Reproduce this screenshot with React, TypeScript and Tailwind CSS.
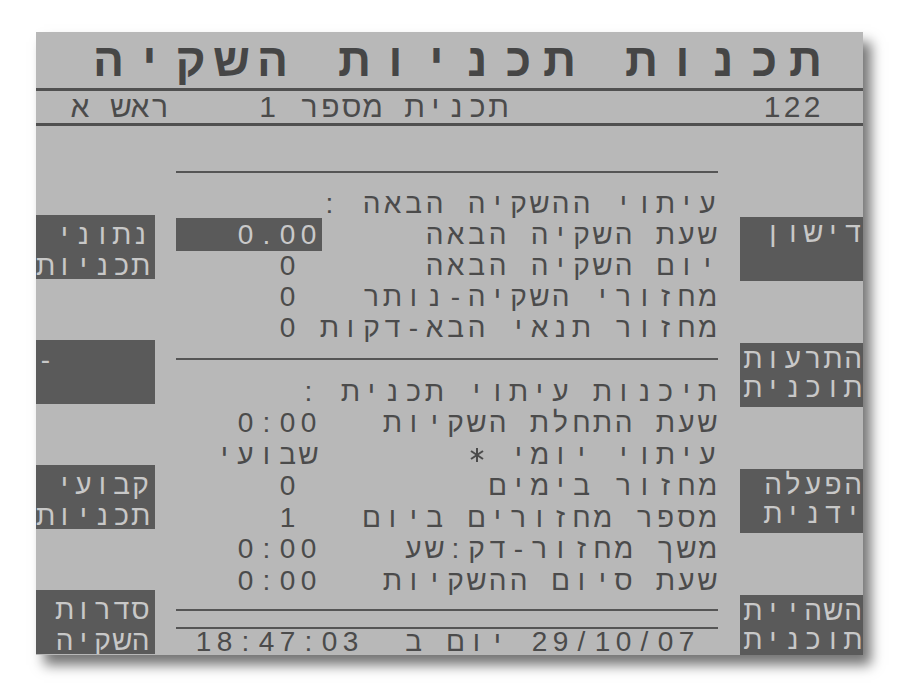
import React from 'react';

type CellsProps = {
  text: string;
  rtl?: boolean;
  cell?: string;
};

// the LCD's six-spoke asterisk
const Star = () => (
  <svg viewBox="0 0 16 16" className="mx-auto h-[16px] w-[16px]" stroke="currentColor" strokeWidth="2">
    <line x1="8" y1="1" x2="8" y2="15" />
    <line x1="2" y1="4" x2="14" y2="12" />
    <line x1="2" y1="12" x2="14" y2="4" />
  </svg>
);

// one character per fixed cell, like the LCD's character grid
const Cells: React.FC<CellsProps> = ({ text, rtl = true, cell = 'w-[21px]' }) => (
  <div className={`flex shrink-0 items-center ${rtl ? 'flex-row-reverse' : 'flex-row'}`}>
    {Array.from(text).map((ch, i) => (
      <span key={i} className={`${cell} shrink-0 text-center`}>
        {ch === '*' ? <Star /> : ch === ' ' ? '\u00a0' : ch}
      </span>
    ))}
  </div>
);

interface RowData {
  label: string;
  value?: string;
  boxed?: boolean;
  rtlValue?: boolean;
}

const section1: RowData[] = [
  { label: 'עיתוי ההשקיה הבאה :' },
  { label: 'שעת השקיה הבאה', value: '0.00', boxed: true },
  { label: 'יום השקיה הבאה', value: '0 ' },
  { label: 'מחזורי השקיה-נותר', value: '0 ' },
  { label: 'מחזור תנאי הבא-דקות', value: '0 ' },
];

const section2: RowData[] = [
  { label: 'תיכנות עיתוי תכנית :' },
  { label: 'שעת התחלת השקיות', value: '0:00' },
  { label: 'עיתוי יומי *', value: 'שבועי', rtlValue: true },
  { label: 'מחזור בימים', value: '0 ' },
  { label: 'מספר מחזורים ביום', value: '1 ' },
  { label: 'משך מחזור-דק:שע', value: '0:00' },
  { label: 'שעת סיום ההשקיות', value: '0:00' },
];

const Row: React.FC<RowData & { height: string }> = ({ label, value, boxed, rtlValue, height }) => (
  <div className={`flex min-w-0 items-center ${height}`}>
    <div
      className={`flex w-[146px] shrink-0 items-center justify-end pr-[3px] ${
        boxed ? 'h-[33px] bg-[#5a5a5a] text-[#c9c9c9]' : ''
      }`}
    >
      {value && <Cells text={value} rtl={!!rtlValue} />}
    </div>
    <div className="flex min-w-0 flex-1 justify-end">
      <Cells text={label} />
    </div>
  </div>
);

const LeftKey: React.FC<{ lines: string[]; dash?: boolean }> = ({ lines, dash }) => (
  <div className="h-[64px] shrink-0 overflow-hidden bg-[#5a5a5a] pt-[4px] pr-[5px] text-[#c8c8c8]">
    {dash && (
      <div className="flex h-[31px] items-center">
        <Cells text="-" cell="w-[19px]" />
      </div>
    )}
    {lines.map((l, i) => (
      <div key={i} className="flex h-[31px] items-center justify-end">
        <Cells text={l} cell="w-[19px]" />
      </div>
    ))}
  </div>
);

const RightKey: React.FC<{ lines: string[] }> = ({ lines }) => (
  <div className="h-[64px] shrink-0 overflow-hidden bg-[#5a5a5a] pt-[1px] text-[#c8c8c8]">
    {lines.map((l, i) => (
      <div key={i} className="flex h-[29px] items-center justify-end">
        <Cells text={l} cell="w-[20px]" />
      </div>
    ))}
  </div>
);

export default function App() {
  return (
    <div className="h-[687px] w-full overflow-hidden bg-white pt-[32px] pl-[36px] font-['Liberation_Sans','DejaVu_Sans',sans-serif] leading-none text-[#4b4b4b]">
      <div className="flex h-[623px] w-[827px] flex-col overflow-hidden bg-[#b8b8b8] shadow-[8px_10px_12px_rgba(0,0,0,0.55)]">
        {/* title */}
        <div className="flex h-[56px] shrink-0 items-center justify-end pr-[37px] text-[46px] font-bold text-[#464646]">
          <Cells text="תכנות תכניות השקיה" cell="w-[41px]" />
        </div>
        <div className="h-[3px] shrink-0 bg-[#505050]" />

        {/* head / program line */}
        <div className="flex h-[32px] shrink-0 items-center pl-[34px] pr-[41px] text-[30px]">
          <Cells text="ראש א" cell="w-[20px]" />
          <div className="ml-[87px]">
            <Cells text="תכנית מספר 1" />
          </div>
          <div className="flex-1" />
          <Cells text="122" rtl={false} cell="w-[20px]" />
        </div>
        <div className="h-[3px] shrink-0 bg-[#505050]" />

        <div className="flex min-h-0 flex-1 text-[28px]">
          {/* left soft keys */}
          <div className="flex w-[119px] shrink-0 flex-col gap-[61px] pt-[89px]">
            <LeftKey lines={['נתוני', 'תכניות']} />
            <LeftKey lines={[]} dash />
            <LeftKey lines={['קבועי', 'תכניות']} />
            <LeftKey lines={['סדרות', 'השקיה']} />
          </div>

          {/* data */}
          <div className="flex min-w-0 flex-1 flex-col pl-[21px] pr-[22px]">
            <div className="mt-[45px] h-[2px] bg-[#555]" />
            <div className="pt-[15px]">
              {section1.map((r, i) => (
                <Row key={i} {...r} height="h-[31px]" />
              ))}
            </div>
            <div className="mt-[15px] h-[2px] bg-[#555]" />
            <div className="pt-[16px]">
              {section2.map((r, i) => (
                <Row key={i} {...r} height="h-[31.5px]" />
              ))}
            </div>
            <div className="mt-[12px] h-[2px] bg-[#555]" />
            <div className="mt-[16px] h-[2px] bg-[#555]" />
            <div className="flex h-[26px] items-center justify-end">
              <div className="flex flex-row-reverse">
                <span className="w-[21px]" />
                <Cells text="29/10/07" rtl={false} />
                <span className="w-[21px]" />
                <Cells text="יום ב" />
                <span className="w-[42px]" />
                <Cells text="18:47:03" rtl={false} />
              </div>
            </div>
          </div>

          {/* right soft keys */}
          <div className="flex w-[123px] shrink-0 flex-col gap-[62px] pt-[91px]">
            <RightKey lines={['דישון']} />
            <RightKey lines={['התרעות', 'תוכנית']} />
            <RightKey lines={['הפעלה', 'ידנית']} />
            <RightKey lines={['השהיית', 'תוכנית']} />
          </div>
        </div>
      </div>
    </div>
  );
}
